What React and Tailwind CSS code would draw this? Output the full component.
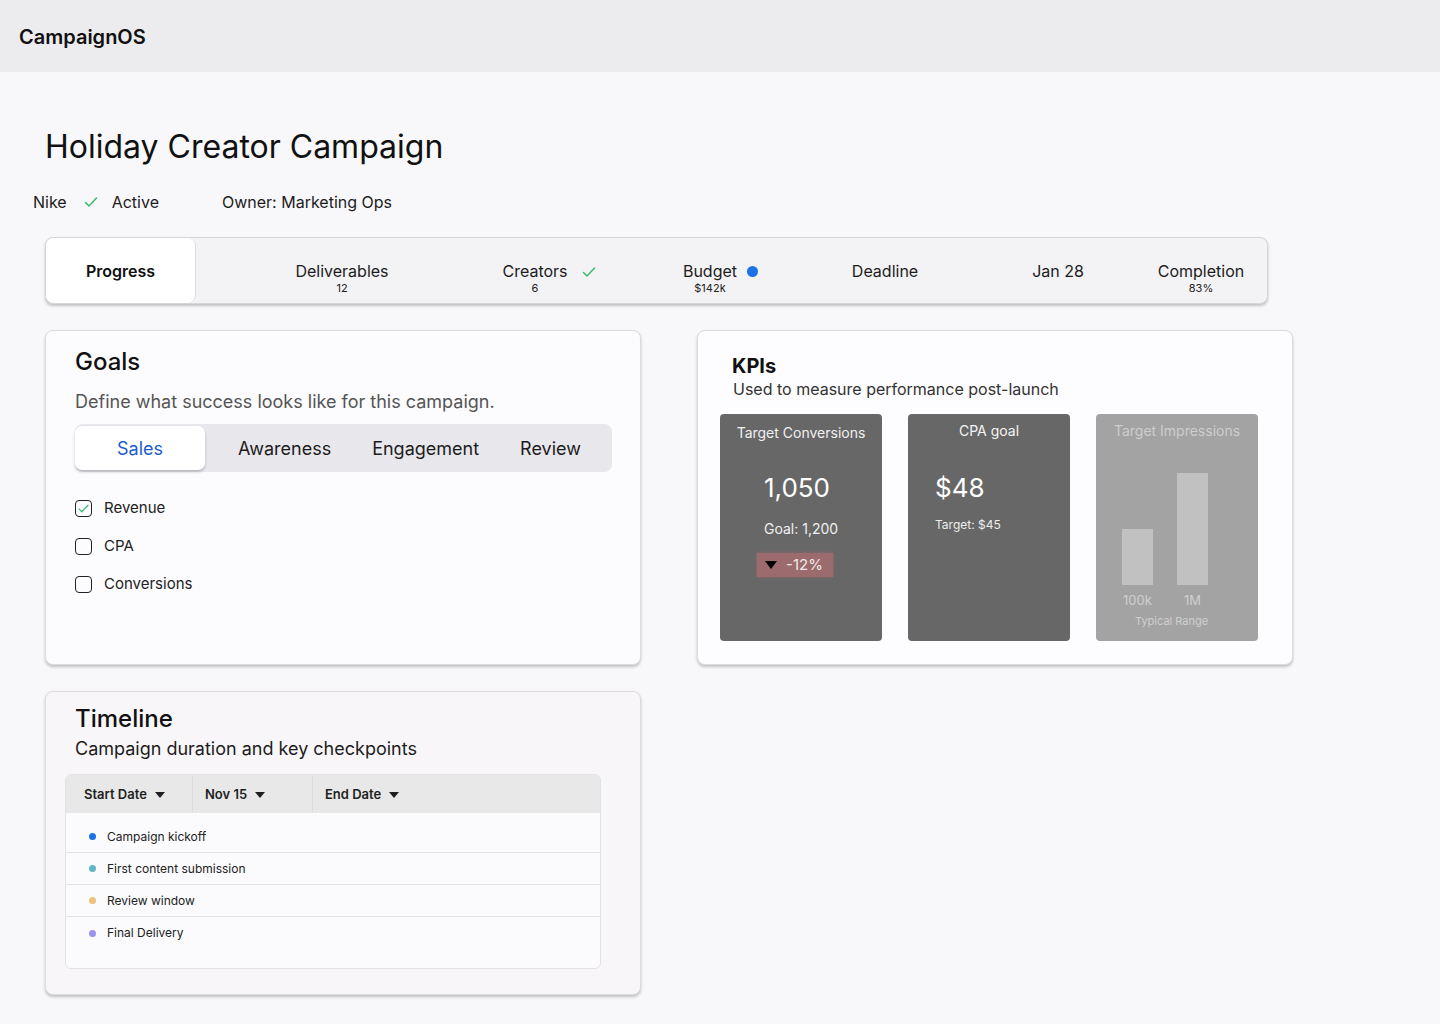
import React from "react";

const font = { fontFamily: "Inter, 'Noto Sans', sans-serif" };

function Check({ className = "" }) {
  return (
    <svg viewBox="0 0 16 16" className={className} fill="none">
      <polyline points="2.5,8.5 6,12 13.5,4" stroke="#3dba6f" strokeWidth="1.5" strokeLinecap="round" strokeLinejoin="round" />
    </svg>
  );
}

function Caret() {
  return (
    <svg viewBox="0 0 10 6" className="w-[10px] h-[6px] ml-[8px]">
      <polygon points="0,0 10,0 5,6" fill="#1f1f1f" />
    </svg>
  );
}

function StatItem({ label, sub, extra, className }) {
  return (
    <div className={`w-[130px] shrink-0 flex flex-col items-center pt-[23px] ${className}`}>
      <div className="relative text-[16px] leading-[20px] text-[#1c1c1c]">
        {label}
        {extra}
      </div>
      {sub && <div className="text-[11px] leading-[14px] text-[#222]">{sub}</div>}
    </div>
  );
}

function GoalCheck({ label, checked }) {
  return (
    <div className="flex items-center h-[24px]">
      <div className="w-[17px] h-[17px] rounded-[4px] border-[1.5px] border-[#222] flex items-center justify-center">
        {checked && <Check className="w-[13px] h-[13px]" />}
      </div>
      <span className="ml-[12px] text-[15px] text-[#222]">{label}</span>
    </div>
  );
}

const milestones = [
  { label: "Campaign kickoff", color: "bg-[#1a73e8]" },
  { label: "First content submission", color: "bg-[#5fb7c6]" },
  { label: "Review window", color: "bg-[#f0c27f]" },
  { label: "Final Delivery", color: "bg-[#9a94ec]" },
];

export default function App() {
  return (
    <div className="min-h-screen bg-[#f8f7fa] text-[#111]" style={font}>
      {/* Top bar */}
      <header className="h-[72px] bg-[#ecebee] flex items-center px-[19px] pt-[2px]">
        <span className="text-[20px] font-semibold text-[#111]">CampaignOS</span>
      </header>

      <main className="px-[45px] pt-[55px] pb-[28px]">
        <h1 className="text-[32px] leading-[40px] font-normal text-[#111]">Holiday Creator Campaign</h1>

        <div className="flex items-center mt-[23px] -ml-[12px] text-[16px] leading-[24px] text-[#1c1c1c]">
          <span>Nike</span>
          <Check className="w-[16px] h-[16px] ml-[16px]" />
          <span className="ml-[13px]">Active</span>
          <span className="ml-[63px]">Owner: Marketing Ops</span>
        </div>

        {/* Stats bar */}
        <div className="mt-[23px] w-[1223px] h-[67px] flex items-stretch rounded-[8px] border border-[#d6d5d9] bg-[#f3f2f5] shadow-[0_2px_3px_rgba(0,0,0,0.22)]">
          <div className="w-[150px] shrink-0 bg-white rounded-[8px] border-r border-[#dddce0] flex items-center justify-center text-[16px] font-semibold text-[#111]">
            Progress
          </div>
          <div className="flex items-start">
            <StatItem className="ml-[81px]" label="Deliverables" sub="12" />
            <StatItem
              className="ml-[63px]"
              label="Creators"
              sub="6"
              extra={<Check className="absolute left-[calc(100%+13px)] top-[3px] w-[16px] h-[16px]" />}
            />
            <StatItem
              className="ml-[45px]"
              label="Budget"
              sub="$142k"
              extra={<span className="absolute left-[calc(100%+10px)] top-[5px] w-[11px] h-[11px] rounded-full bg-[#1a73e8]" />}
            />
            <StatItem className="ml-[45px]" label="Deadline" />
            <StatItem className="ml-[43px]" label="Jan 28" />
            <StatItem className="ml-[13px]" label="Completion" sub="83%" />
          </div>
        </div>

        <div className="mt-[26px] flex gap-[56px] items-start">
          <div className="flex flex-col gap-[26px]">
            {/* Goals */}
            <section className="w-[596px] h-[335px] rounded-[8px] border border-[#dcdbdf] bg-[#fcfbfd] shadow-[0_2px_3px_rgba(0,0,0,0.22)] px-[29px] pt-[15px]">
              <h2 className="text-[24px] leading-[32px] font-medium text-[#111]">Goals</h2>
              <p className="mt-[10px] text-[18px] leading-[28px] text-[#555]">Define what success looks like for this campaign.</p>
              <div className="mt-[8px] w-[537px] h-[48px] rounded-[8px] bg-[#e8e7ec] flex items-center">
                <div className="w-[130px] h-[44px] rounded-[7px] bg-white shadow-[0_2px_3px_rgba(0,0,0,0.22)] flex items-center justify-center text-[18px] text-[#1a5dd1] pt-[1px]">
                  Sales
                </div>
                <div className="flex items-center gap-[41px] ml-[33px] text-[18px] text-[#1c1c1c] pt-[1px]">
                  <span>Awareness</span>
                  <span>Engagement</span>
                  <span>Review</span>
                </div>
              </div>
              <div className="mt-[24px] flex flex-col gap-[14px]">
                <GoalCheck label="Revenue" checked />
                <GoalCheck label="CPA" />
                <GoalCheck label="Conversions" />
              </div>
            </section>

            {/* Timeline */}
            <section className="w-[596px] h-[304px] rounded-[8px] border border-[#dcdbdf] bg-[#f8f6f9] shadow-[0_2px_3px_rgba(0,0,0,0.22)] pt-[11px] px-[19px]">
              <h2 className="px-[10px] text-[24px] leading-[32px] font-medium text-[#111]">Timeline</h2>
              <p className="px-[10px] text-[18px] leading-[28px] text-[#1c1c1c]">Campaign duration and key checkpoints</p>
              <div className="mt-[11px] w-[536px] h-[195px] rounded-[6px] border border-[#e3e2e5] bg-[#fbfafc] overflow-hidden">
                <div className="h-[38px] bg-[#e8e8e8] flex text-[13px] font-semibold text-[#1f1f1f] pt-[1px]">
                  <div className="w-[127px] flex items-center pl-[18px] border-r border-[#dcdcdc]">
                    Start Date <Caret />
                  </div>
                  <div className="w-[120px] flex items-center pl-[12px] border-r border-[#dcdcdc]">
                    Nov 15 <Caret />
                  </div>
                  <div className="flex items-center pl-[12px]">
                    End Date <Caret />
                  </div>
                </div>
                <div className="pt-[8px]">
                  {milestones.map((m, i) => (
                    <div
                      key={m.label}
                      className={`h-[32px] flex items-center pl-[23px] ${i < milestones.length - 1 ? "border-b border-[#e2e1e4]" : ""}`}
                    >
                      <span className={`w-[7px] h-[7px] rounded-full ${m.color}`} />
                      <span className="ml-[11px] text-[12px] text-[#222]">{m.label}</span>
                    </div>
                  ))}
                </div>
              </div>
            </section>
          </div>

          {/* KPIs */}
          <section className="w-[596px] h-[335px] rounded-[8px] border border-[#dcdbdf] bg-[#fdfcfe] shadow-[0_2px_3px_rgba(0,0,0,0.22)] px-[22px] pt-[23px]">
            <h2 className="pl-[12px] text-[20px] leading-[24px] font-bold text-[#111]">KPIs</h2>
            <p className="pl-[13px] text-[16px] leading-[22px] text-[#333]">Used to measure performance post-launch</p>
            <div className="mt-[14px] flex gap-[26px]">
              <div className="w-[162px] h-[227px] rounded-[4px] bg-[#676767] pt-[9px] text-white">
                <div className="text-center text-[14px] leading-[20px] text-[#f0f0f0]">Target Conversions</div>
                <div className="pl-[44px]">
                  <div className="mt-[29px] text-[26px] leading-[32px]">1,050</div>
                  <div className="mt-[15px] text-[14px] leading-[20px] text-[#f0f0f0]">Goal: 1,200</div>
                  <div className="mt-[14px] -ml-[7px] w-[76px] h-[24px] bg-[#9b6b6d] flex items-center px-[8px] shadow-[0_0_3px_rgba(155,107,109,0.9)]">
                    <svg viewBox="0 0 12 8" className="w-[12px] h-[8px]">
                      <polygon points="0,0 12,0 6,8" fill="#000" />
                    </svg>
                    <span className="ml-[9px] text-[15px] leading-[20px] text-[#f3e9e9]">-12%</span>
                  </div>
                </div>
              </div>

              <div className="w-[162px] h-[227px] rounded-[4px] bg-[#676767] pt-[7px] text-white">
                <div className="text-center text-[14px] leading-[20px] text-[#f5f5f5]">CPA goal</div>
                <div className="pl-[27px]">
                  <div className="mt-[31px] text-[26px] leading-[32px]">$48</div>
                  <div className="mt-[13px] text-[12px] leading-[16px] text-[#ededed]">Target: $45</div>
                </div>
              </div>

              <div className="w-[162px] h-[227px] rounded-[4px] bg-[#a3a3a3] pt-[7px] flex flex-col">
                <div className="text-center text-[14px] leading-[20px] text-[#cdcdcd]">Target Impressions</div>
                <div className="mt-[32px] ml-[26px] flex items-end gap-[24px] h-[112px]">
                  <div className="w-[31px] h-[56px] bg-[#c1c1c1]" />
                  <div className="w-[31px] h-[112px] bg-[#c1c1c1]" />
                </div>
                <div className="mt-[6px] ml-[26px] flex gap-[24px] text-[13px] leading-[18px] text-[#cfcfcf]">
                  <span className="w-[31px] text-center">100k</span>
                  <span className="w-[31px] text-center">1M</span>
                </div>
                <div className="mt-[5px] ml-[39px] text-[11px] leading-[14px] text-[#cfcfcf]">Typical Range</div>
              </div>
            </div>
          </section>
        </div>
      </main>
    </div>
  );
}
